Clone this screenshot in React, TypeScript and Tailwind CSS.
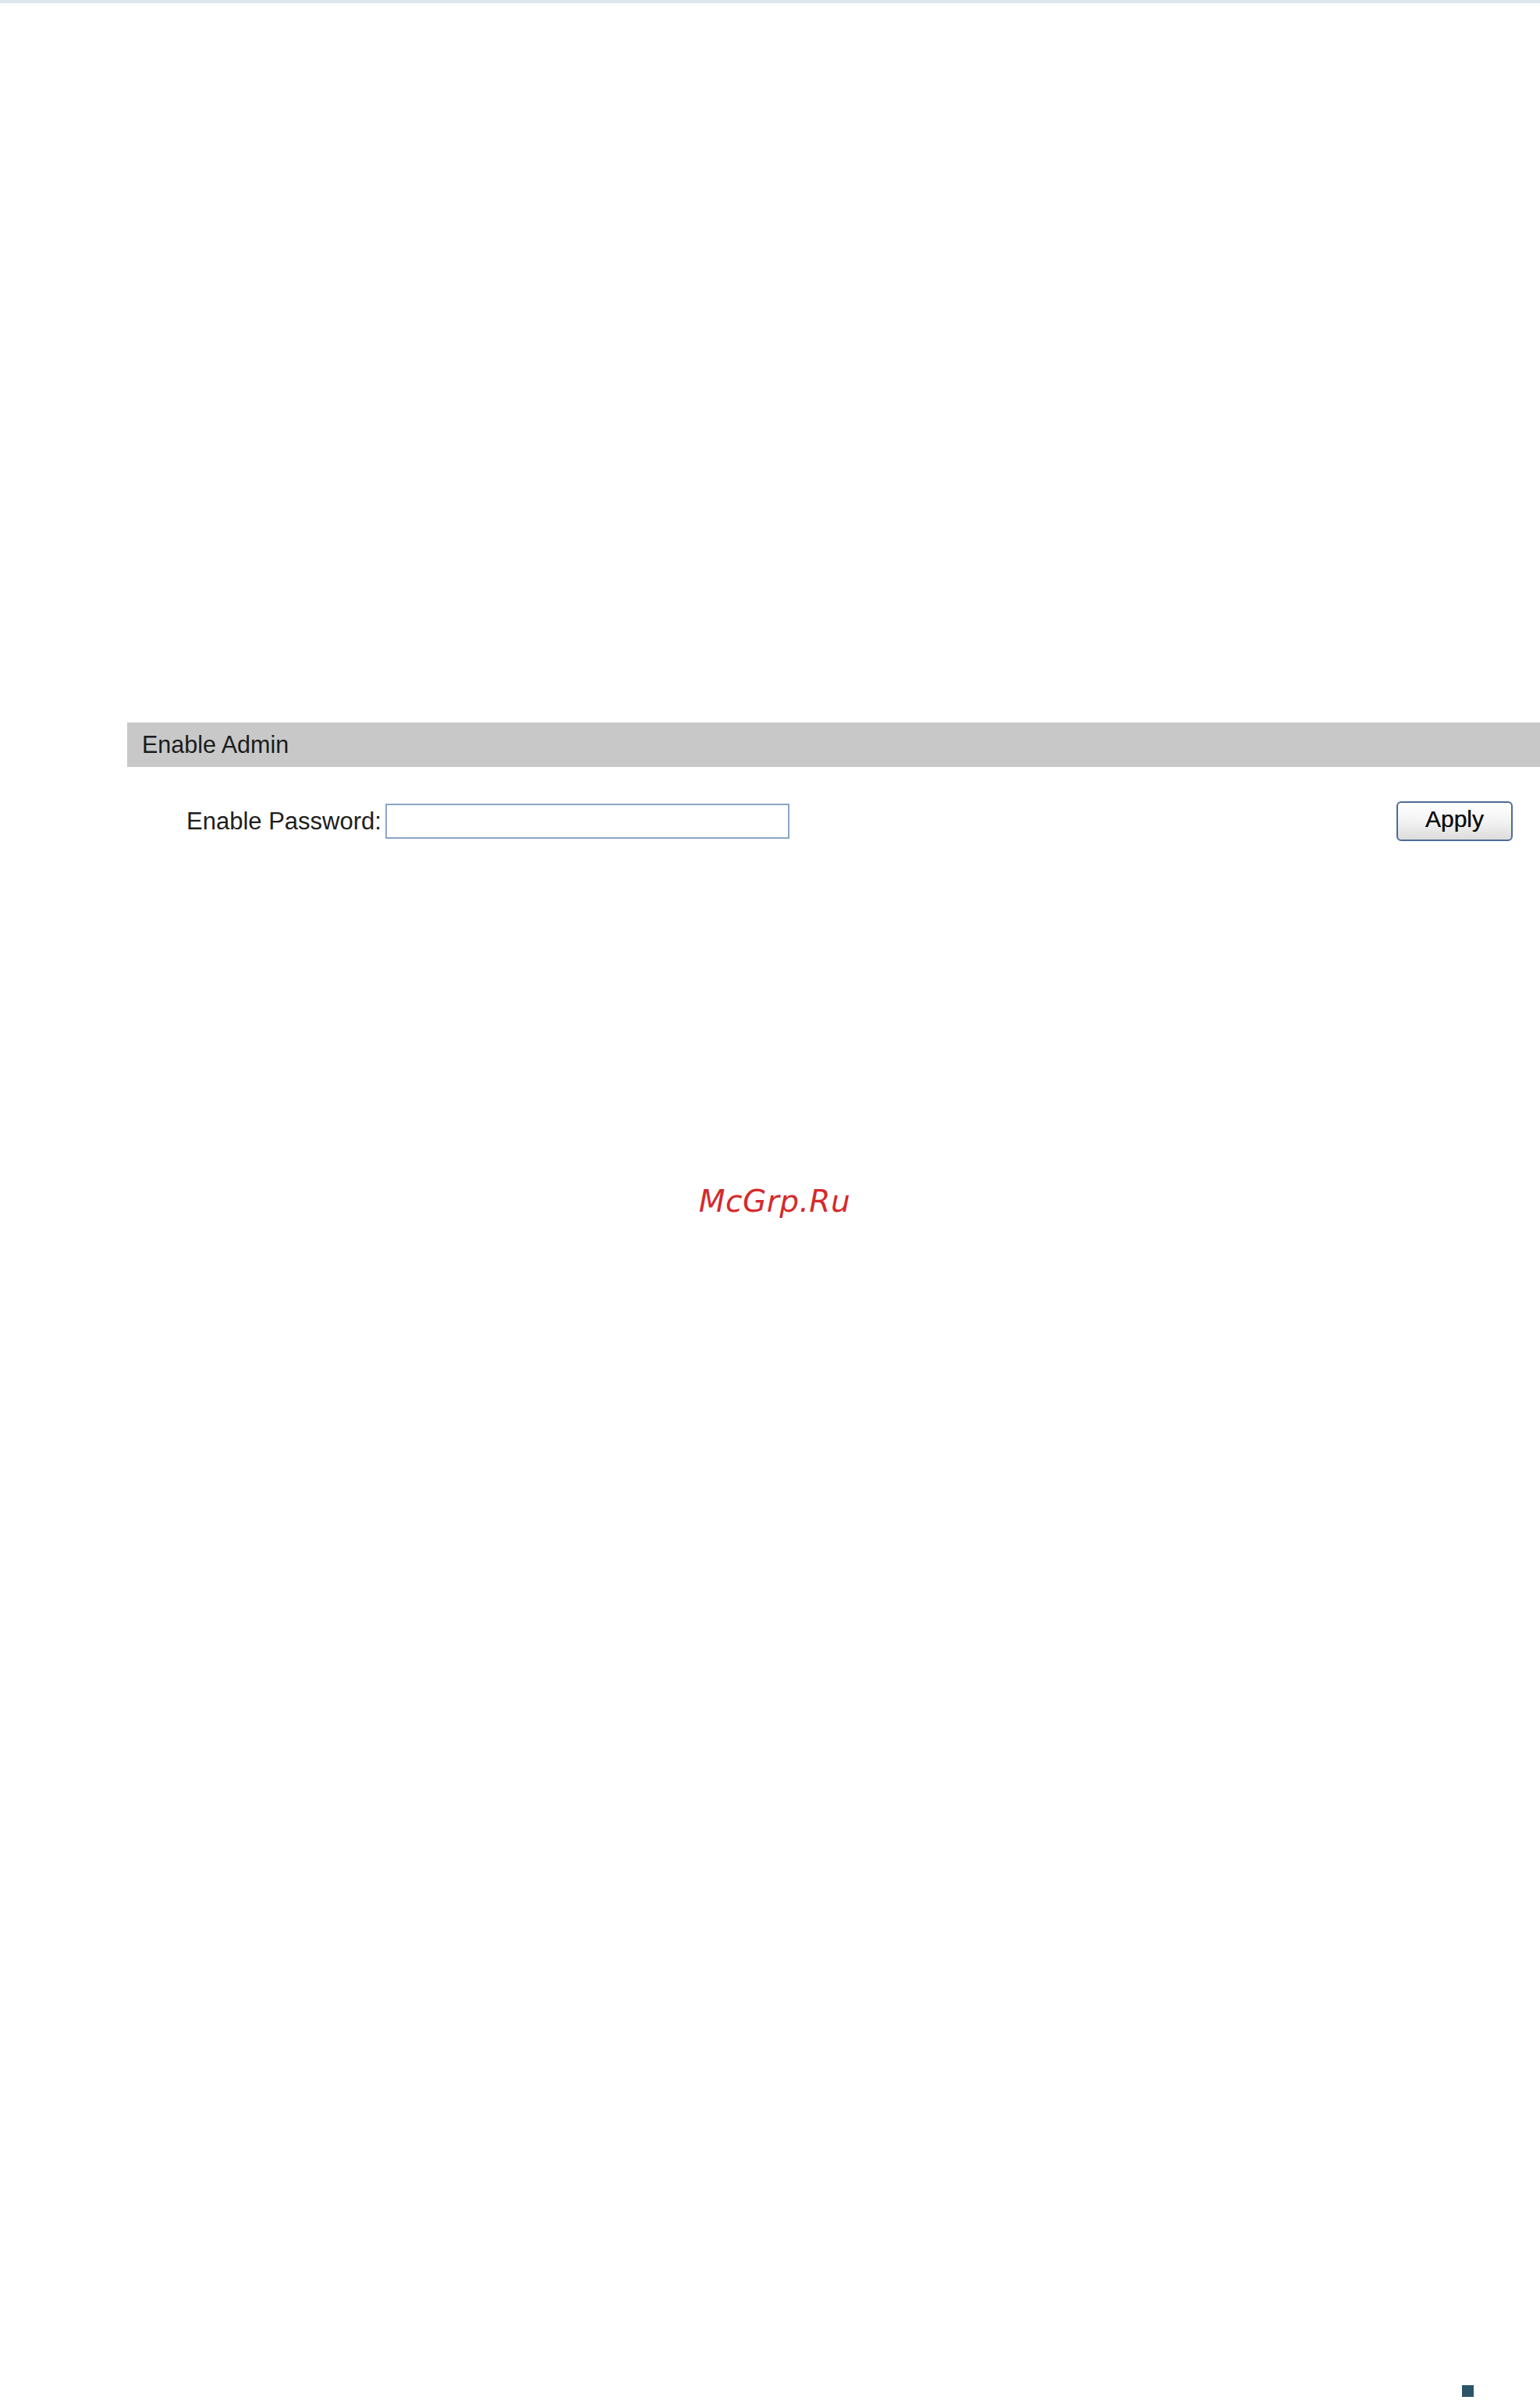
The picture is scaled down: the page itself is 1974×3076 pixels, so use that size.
import { useState } from "react";

export default function App() {
  const [password, setPassword] = useState("");

  return (
    <div className="relative flex min-h-[3076px] w-[1974px] flex-col bg-white font-['Liberation_Sans',Arial,sans-serif]">
      {/* thin band along the top edge of the page */}
      <div className="h-[4px] w-full bg-[#dce6ec]" />

      {/* Enable Admin panel */}
      <section className="ml-[163px] mt-[922px]">
        <div className="flex h-[57px] items-center bg-[#c8c8c8] pl-[19px] text-[30.5px] leading-none text-[#1c1c1c]">
          Enable Admin
        </div>

        <form
          className="mt-[44px] flex h-[51px] items-center pr-[35px]"
          onSubmit={(e) => e.preventDefault()}
        >
          <label
            htmlFor="enable-password"
            className="ml-[76px] text-[31px] leading-none text-[#202020]"
          >
            Enable Password:
          </label>
          <input
            id="enable-password"
            type="password"
            value={password}
            onChange={(e) => setPassword(e.target.value)}
            className="ml-[5px] h-[45px] w-[518px] border-[2.5px] border-[#8aa6c6] bg-white px-2 text-[24px] outline-none"
          />
          <button
            type="submit"
            className="ml-auto flex h-[51px] w-[149px] items-center justify-center rounded-[6px] border-2 border-[#4c6c98] bg-gradient-to-b from-white via-[#f3f3f3] to-[#dcdcdc] pb-[6px] text-[30px] leading-none text-[#111] [text-shadow:0_0_0.6px_#111]"
          >
            Apply
          </button>
        </form>
      </section>

      {/* site mark */}
      <div className="mt-[442px] flex justify-center pl-[12px]">
        <span className="font-['DejaVu_Sans',Verdana,sans-serif] text-[39px] italic leading-none tracking-[0.5px] text-[#d42a2c]">
          McGrp.Ru
        </span>
      </div>

      {/* page corner marker */}
      <div className="mt-auto mb-[4px] ml-[1874px] h-[15px] w-[15px] bg-[#2b5468]" />
    </div>
  );
}
